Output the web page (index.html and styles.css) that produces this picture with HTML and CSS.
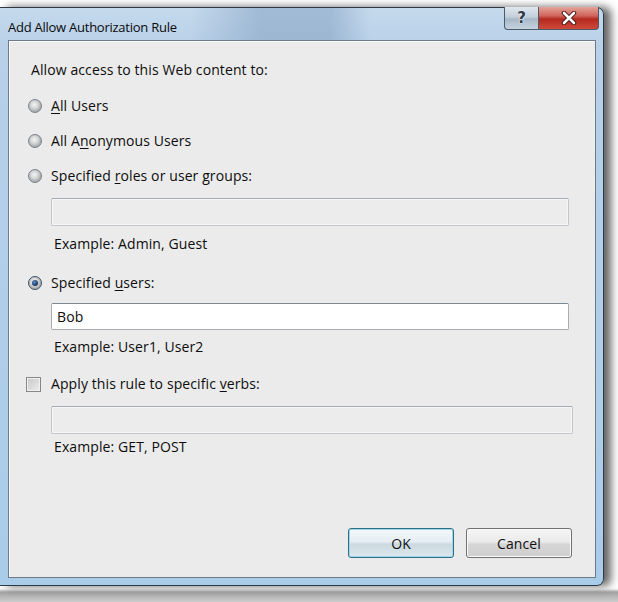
FILE: index.html
```html
<!DOCTYPE html>
<html>
<head>
<meta charset="utf-8">
<link rel="stylesheet" href="styles.css">
</head>
<body>
<div class="window">
  <div class="titlebar">
    <span class="title">Add Allow Authorization Rule</span>
    <div class="caption-btns">
      <div class="cbtn help"><span>?</span></div>
      <div class="cbtn close">
        <svg width="16" height="14" viewBox="0 0 16 14"><path d="M3 2 L13 12 M13 2 L3 12" stroke="#3a1010" stroke-width="4.5" stroke-linecap="round"/><path d="M3 2 L13 12 M13 2 L3 12" stroke="#ffffff" stroke-width="2.6" stroke-linecap="round"/></svg>
      </div>
    </div>
  </div>
  <div class="content">
    <div class="heading">Allow access to this Web content to:</div>
    <div class="opt r1"><span class="radio"></span><span><u>A</u>ll Users</span></div>
    <div class="opt r2"><span class="radio"></span><span>All A<u>n</u>onymous Users</span></div>
    <div class="opt r2"><span class="radio"></span><span>Specified <u>r</u>oles or user groups:</span></div>
    <div class="textbox disabled tb1"></div>
    <div class="example ex1">Example: Admin, Guest</div>
    <div class="opt r4"><span class="radio checked"></span><span>Specified <u>u</u>sers:</span></div>
    <div class="textbox tb2">Bob</div>
    <div class="example ex2">Example: User1, User2</div>
    <div class="opt r5"><span class="check"></span><span>Apply this rule to specific <u>v</u>erbs:</span></div>
    <div class="textbox disabled tb3"></div>
    <div class="example ex3">Example: GET, POST</div>
    <div class="buttons">
      <div class="btn ok">OK</div>
      <div class="btn cancel">Cancel</div>
    </div>
  </div>
</div>
</body>
</html>
```
FILE: styles.css
```css
html, body {
  margin: 0;
  padding: 0;
}
body {
  width: 618px;
  height: 602px;
  background: linear-gradient(to bottom, #ffffff 0, #ffffff 587px, #f6f6f6 589px, #a2a2a2 592px, #cdcdcd 602px);
  font-family: "Open Sans", "Noto Sans", sans-serif;
  color: #0d0d0d;
  overflow: hidden;
}
.window {
  margin-top: 7px;
  width: 604px;
  height: 579px;
  box-sizing: border-box;
  border: 1px solid #2d3a46;
  border-left: none;
  border-radius: 0 7px 7px 0;
  background: linear-gradient(to bottom, #c4d9ec 0, #b8d0e8 40px, #a9cce9 100%);
  padding: 0 7px 7px 8px;
  display: flex;
  flex-direction: column;
  box-shadow: 7px 0 9px rgba(50,50,50,0.75);
}
.titlebar {
  height: 32px;
  display: flex;
  align-items: flex-start;
  justify-content: space-between;
  background: linear-gradient(to right, rgba(255,255,255,0) 0, rgba(255,255,255,0) 190px, rgba(120,150,185,0.45) 260px, rgba(120,150,185,0.45) 330px, rgba(255,255,255,0) 370px);
  margin-left: -8px;
  margin-right: -7px;
  padding-left: 8px;
  padding-right: 4px;
}
.title {
  font-size: 13px;
  line-height: 14px;
  margin-top: 12px;
  color: #0a0a0a;
  letter-spacing: -0.25px;
}
.caption-btns {
  display: flex;
  margin-top: -1px;
}
.cbtn {
  height: 23px;
  border: 1px solid #4a5a6a;
  border-top: none;
  box-sizing: border-box;
  display: flex;
  align-items: center;
  justify-content: center;
}
.help {
  width: 34px;
  border-radius: 0 0 0 4px;
  background: linear-gradient(to bottom, #dfe7ef 0, #c3cfdb 45%, #a9b8c8 55%, #c6d3df 100%);
  border-right: none;
}
.help span {
  font-family: "DejaVu Sans", sans-serif;
  font-weight: bold;
  font-size: 15px;
  color: #2f3a48;
  text-shadow: 0 0 2px #fff, 0 0 1px #fff;
}
.close {
  width: 61px;
  border-radius: 0 0 4px 0;
  background: linear-gradient(to bottom, #e4a49a 0, #d0645a 40%, #b52a1e 55%, #cf4a3a 100%);
}
.content {
  flex: 1;
  background: #ebebeb;
  border: 1px solid #6d7b88;
  box-shadow: inset 1px 1px 0 #fbfbfb;
  padding: 19px 23px 19px 0;
  display: flex;
  flex-direction: column;
  font-size: 14px;
  letter-spacing: 0.1px;
}
.heading {
  height: 20px;
  line-height: 20px;
  margin-left: 22px;
}
.opt {
  height: 20px;
  display: flex;
  align-items: center;
  line-height: 20px;
}
.opt u {
  text-decoration-thickness: 1px;
  text-underline-offset: 2px;
}
.r1 { margin-top: 16px; }
.r2 { margin-top: 15px; }
.r4 { margin-top: 19px; }
.r5 { margin-top: 17px; }
.radio {
  width: 14px;
  height: 14px;
  margin-left: 19px;
  margin-right: 9px;
  box-sizing: border-box;
  border-radius: 50%;
  border: 1px solid #7d8288;
  background: radial-gradient(circle at 45% 40%, #f4f4f4 0, #d8d8d8 35%, #a6aaae 70%, #d0d0d0 100%);
  position: relative;
}
.radio.checked {
  border-color: #3c4e62;
}
.radio.checked::after {
  content: "";
  position: absolute;
  left: 3px;
  top: 3px;
  width: 6px;
  height: 6px;
  border-radius: 50%;
  background: radial-gradient(circle at 40% 35%, #5a8cc8 0, #14355e 70%);
}
.check {
  width: 15px;
  height: 15px;
  margin-left: 17px;
  margin-right: 10px;
  box-sizing: border-box;
  border: 1px solid #868787;
  background: linear-gradient(135deg, #c8c8c8 0, #ececec 100%);
  box-shadow: inset 0 0 0 1px #f2f2f2;
}
.textbox {
  margin-left: 42px;
  box-sizing: border-box;
  border: 1px solid #abadb3;
  border-top-color: #7e8690;
  border-radius: 2px;
  font-size: 14px;
  padding-left: 5px;
  display: flex;
  align-items: center;
}
.textbox.disabled {
  background: #ececec;
  border-color: #c2c6ca;
  border-top-color: #a6acb2;
  box-shadow: inset 0 0 0 1px #f6f6f6;
}
.tb1 { margin-top: 12px; height: 28px; width: 518px; }
.tb2 { margin-top: 10px; height: 27px; width: 518px; background: #ffffff; }
.tb3 { margin-top: 12px; height: 28px; width: 522px; }
.example {
  margin-left: 45px;
  height: 20px;
  line-height: 20px;
}
.ex1 { margin-top: 8px; }
.ex2 { margin-top: 7px; }
.ex3 { margin-top: 3px; }
.buttons {
  margin-top: auto;
  display: flex;
  justify-content: flex-end;
  gap: 12px;
}
.btn {
  width: 106px;
  height: 30px;
  box-sizing: border-box;
  border-radius: 3px;
  display: flex;
  align-items: center;
  justify-content: center;
  font-size: 14px;
  color: #111;
}
.ok {
  border: 1px solid #2f6f86;
  background: linear-gradient(to bottom, #f3f8fb 0, #e5eef3 45%, #ccd9e0 55%, #dce8ee 100%);
  box-shadow: inset 0 0 0 1px #9fd6ec;
}
.cancel {
  border: 1px solid #707070;
  background: linear-gradient(to bottom, #f5f5f5 0, #ebebeb 45%, #d6d6d6 55%, #cfcfcf 100%);
  box-shadow: inset 0 0 0 1px #fbfbfb;
}
```
